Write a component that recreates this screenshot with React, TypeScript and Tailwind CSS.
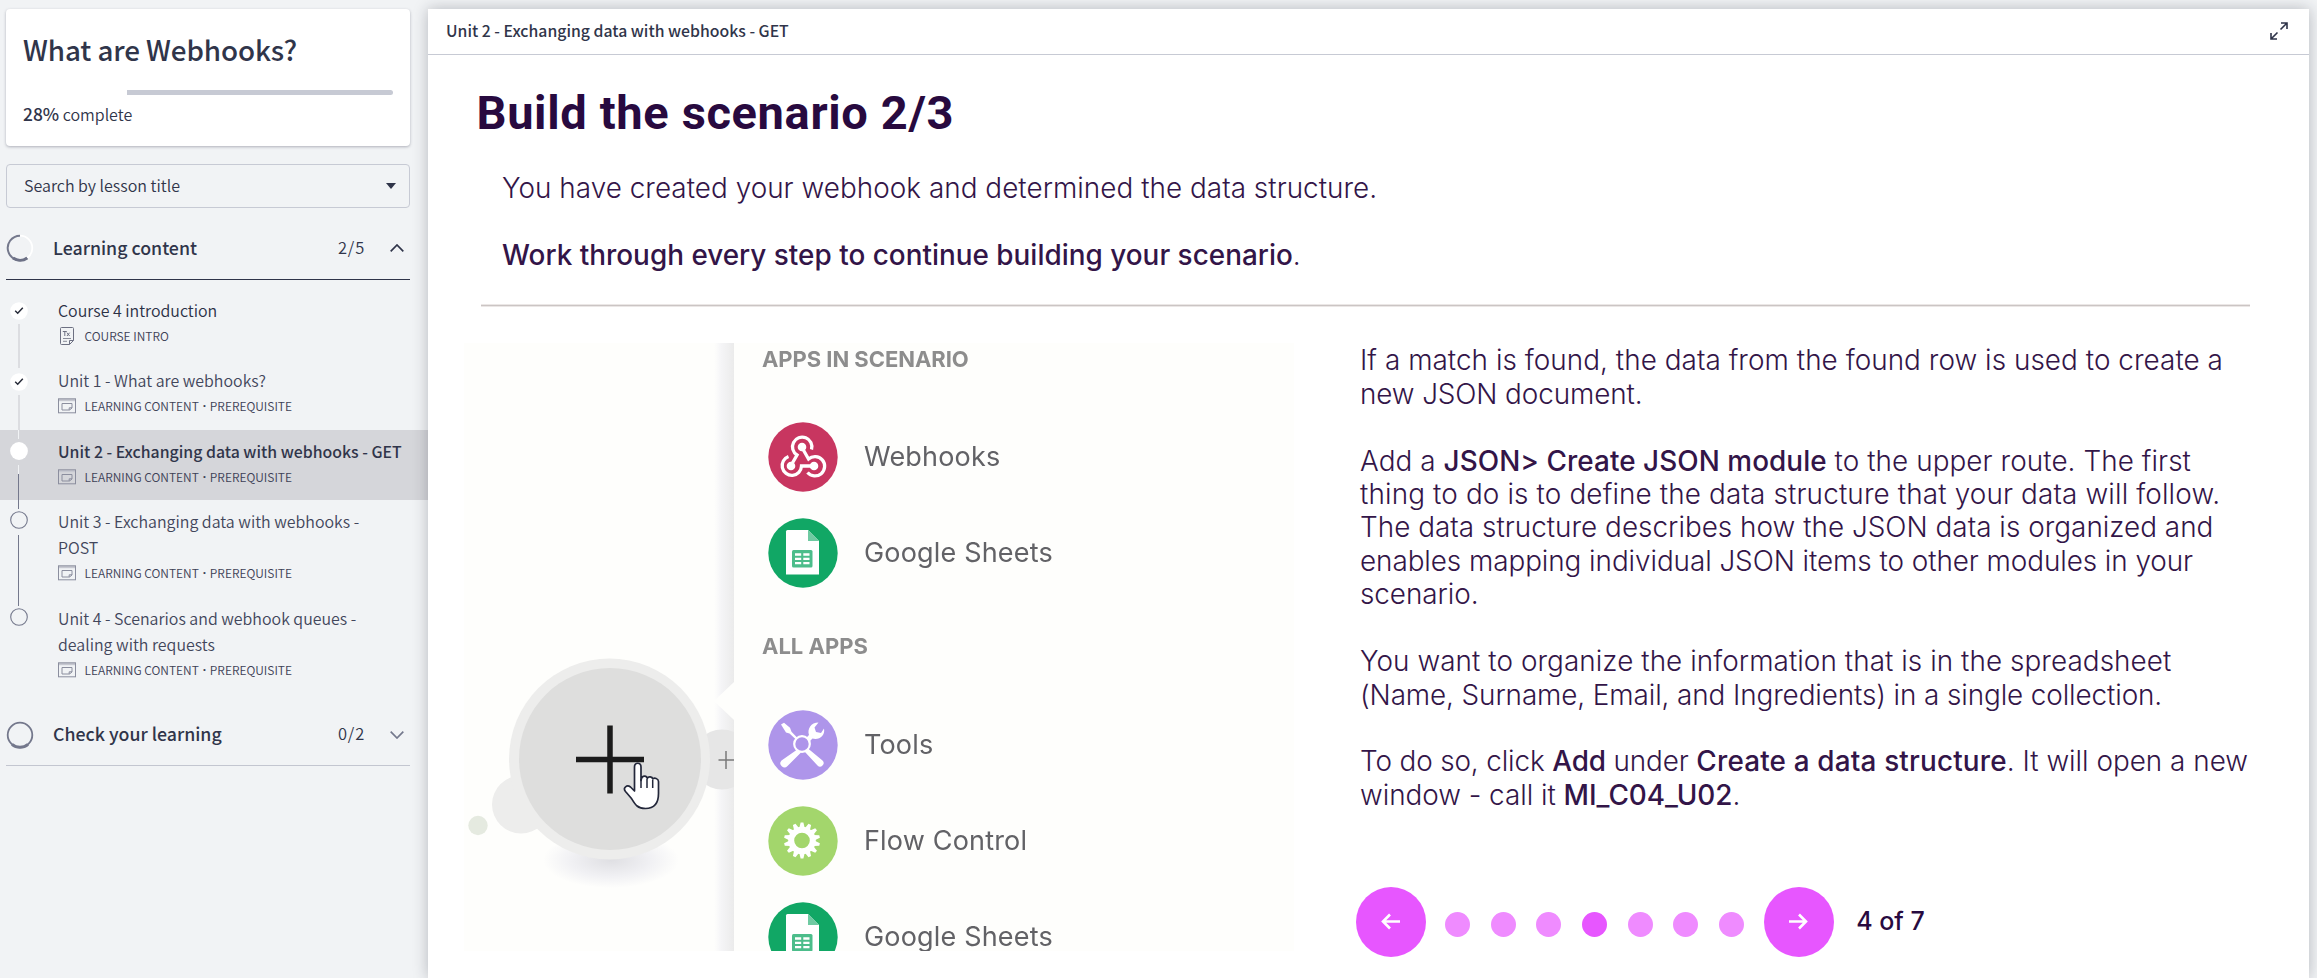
import type { ReactNode } from "react";

const SANS = "font-['Noto_Sans_CJK_SC','Noto_Sans',sans-serif]";

function CheckDot() {
  return (
    <svg viewBox="0 0 20 20" className="size-5 shrink-0">
      <circle cx="10" cy="10" r="8.8" fill="#fff" />
      <path d="M6.2 9.8 8.7 12.2 13.8 6.8" fill="none" stroke="#262a38" strokeWidth="1.5" />
    </svg>
  );
}

function FullDot() {
  return (
    <svg viewBox="0 0 20 20" className="size-5 shrink-0">
      <circle cx="10" cy="10" r="8.9" fill="#fff" />
    </svg>
  );
}

function EmptyDot() {
  return (
    <svg viewBox="0 0 20 20" className="size-5 shrink-0">
      <circle cx="10" cy="10" r="8.3" fill="none" stroke="#74788c" strokeWidth="1.1" />
    </svg>
  );
}

function DocIcon() {
  return (
    <svg viewBox="0 0 18 20" className="h-5 w-[18px]" fill="none" stroke="#6d7082" strokeWidth="1">
      <path d="M15.500 14.500V2.500a1 1 0 0 0-1-1h-11a1 1 0 0 0-1 1v15a1 1 0 0 0 1 1h8z" />
      <path d="M15.500 14.500h-4v4" />
      <path d="M4.800 5.500h4M6.800 5.500v4.500M9 6.700l2.600 3.300M11.600 6.700 9 10" />
      <path d="M5 12.500h8M5 15.300h4" strokeWidth=".8" />
    </svg>
  );
}

function WindowIcon() {
  return (
    <svg viewBox="0 0 18 16" className="h-4 w-[18px]" fill="none" stroke="#8b8e9e" strokeWidth="1">
      <path d="M.5 1h17v2.200H.500z" fill="#c6c8d0" stroke="none" />
      <rect x=".5" y=".8" width="17" height="14" />
      <path d="M4 5.500h10v4.500l-2.500 2H4z" />
      <path d="M11.200 12V9.800H14" />
    </svg>
  );
}

type Item = {
  title: string;
  meta: string;
  prereq?: boolean;
  state: "done" | "current" | "todo";
};

const items: Item[] = [
  { title: "Course 4 introduction", meta: "COURSE INTRO", state: "done" },
  { title: "Unit 1 - What are webhooks?", meta: "LEARNING CONTENT", prereq: true, state: "done" },
  { title: "Unit 2 - Exchanging data with webhooks - GET", meta: "LEARNING CONTENT", prereq: true, state: "current" },
  { title: "Unit 3 - Exchanging data with webhooks - POST", meta: "LEARNING CONTENT", prereq: true, state: "todo" },
  { title: "Unit 4 - Scenarios and webhook queues - dealing with requests", meta: "LEARNING CONTENT", prereq: true, state: "todo" },
];

function Connector({ index }: { index: number }) {
  if (index === 0) return <span className="mt-[3px] h-[44px] w-[2px] shrink-0 bg-[#dcdde1]" />;
  if (index === 1) return <span className="mt-[3px] h-[35px] w-[2px] shrink-0 bg-[#dcdde1]" />;
  if (index === 2)
    return (
      <>
        <span className="mt-[4px] h-[9px] w-px shrink-0 bg-[#f1f3f5]" />
        <span className="h-[35px] w-px shrink-0 bg-[#74788c]" />
      </>
    );
  if (index === 3) return <span className="mt-[5px] h-[71px] w-px shrink-0 bg-[#74788c]" />;
  return null;
}

function LessonItem({ item, index }: { item: Item; index: number }) {
  const current = item.state === "current";
  const tall = index > 2;
  const pad = index === 0 ? "pt-[11px]" : index === 1 ? "pt-[12px]" : index === 2 ? "" : "pt-[10px]";
  return (
    <li className={`flex w-[428px] ${tall ? "h-[97px]" : "h-[70px]"} ${current ? "bg-[#d5d6da]" : ""}`}>
      <div className={`ml-[8px] flex w-[21px] flex-col items-center ${pad}`}>
        {current && <span className="mb-[2px] h-[9px] w-px shrink-0 bg-[#f1f3f5]" />}
        {item.state === "done" ? <CheckDot /> : current ? <FullDot /> : <EmptyDot />}
        <Connector index={index} />
      </div>
      <div className={`ml-[29px] w-[350px] ${index < 2 ? "pt-[7px]" : current ? "pt-[9px]" : "pt-[8px]"}`}>
        <div
          className={`leading-[26px] ${current ? "text-[15.85px] font-medium whitespace-nowrap text-[#30354a]" : tall ? "w-[320px] text-[15.95px] font-[350] text-[#42465b]" : index === 1 ? "text-[15.95px] font-[350] text-[#42465b]" : "text-[15.95px] font-[350] text-[#2b3045]"}`}
        >
          {item.title}
        </div>
        <div className={`flex items-center text-[12px] leading-[24px] font-[350] text-[#3d4156] ${current ? "h-[24px]" : index === 0 ? "h-[25px]" : "h-[26px]"}`}>
          <span className="flex w-[26.500px]">{item.prereq ? <WindowIcon /> : <DocIcon />}</span>
          <span>{item.meta}</span>
          {item.prereq && (
            <>
              <span className="w-[11px] text-center font-['Noto_Sans'] font-bold">·</span>
              <span>PREREQUISITE</span>
            </>
          )}
        </div>
      </div>
    </li>
  );
}

function Sidebar() {
  return (
    <aside className={`h-[978px] w-[428px] pt-[9px] text-[#30354a] ${SANS}`}>
      <section className="ml-[6px] flex h-[137px] w-[404px] flex-col rounded-[4px] bg-white px-[17px] pt-[24px] shadow-[0_1px_3px_rgba(48,53,74,0.35)]">
        <h1 className="text-[27.8px] leading-[32px] font-medium tracking-[-0.1px]">What are Webhooks?</h1>
        <div className="mt-[25px] ml-[104px] h-[5px] w-[266px] rounded-r-[3px] bg-[#c7cad4]" />
        <p className="mt-[5px] text-[16px] leading-[28px] font-[350]">
          <span className="text-[17.4px] font-medium">28%</span> complete
        </p>
      </section>

      <div className="mt-[18px] ml-[6px] flex h-[44px] w-[404px] items-center justify-between rounded-[4px] border border-[#c7cad4] pr-[13px] pl-[17px]">
        <span className="pb-[3px] text-[16px] leading-[24px] font-[350]">Search by lesson title</span>
        <svg viewBox="0 0 10 6" className="h-[6px] w-[10px]" fill="#2f3449">
          <path d="M0 0h10L5 6z" />
        </svg>
      </div>

      <div className="ml-[6px] flex h-[72px] w-[404px] items-center border-b border-[#2f3449] pt-[9px]">
        <svg viewBox="0 0 28 28" className="size-7" fill="none">
          <circle cx="14" cy="14" r="12.300" stroke="#fff" strokeWidth="1.800" />
          <path d="M14 1.700A12.300 12.300 0 1 0 21.200 24" stroke="#74788c" strokeWidth="2" />
          <path d="M7 24.100A12.300 12.300 0 0 0 21.200 24" stroke="#6d7186" strokeWidth="3" />
        </svg>
        <span className="-mt-px ml-[19px] text-[17.75px] font-medium">Learning content</span>
        <span className="-mt-px ml-auto text-[16.500px] font-[350] tracking-[0.8px]">2/5</span>
        <svg viewBox="0 0 14 8" className="mr-[6px] ml-[25px] h-[8px] w-[14px]" fill="none" stroke="#2f3449" strokeWidth="1.7">
          <path d="M.7 7.300 7 1l6.300 6.300" />
        </svg>
      </div>

      <ul className="mt-[10px]">
        {items.map((item, i) => (
          <LessonItem key={item.title} item={item} index={i} />
        ))}
      </ul>

      <div className="ml-[6px] flex h-[72px] w-[404px] items-center border-b border-[#c3c6d0] pt-[10px]">
        <svg viewBox="0 0 28 28" className="size-7" fill="none" stroke="#74788c">
          <circle cx="14" cy="14" r="12.300" strokeWidth="1.800" />
          <path d="M6 23.300A12.300 12.300 0 0 0 22 23.300" strokeWidth="3" />
        </svg>
        <span className="-mt-0.5 ml-[19px] text-[17.75px] font-medium">Check your learning</span>
        <span className="-mt-0.5 ml-auto text-[16.500px] font-[350] tracking-[0.8px]">0/2</span>
        <svg viewBox="0 0 14 8" className="mr-[6px] ml-[25px] h-[8px] w-[14px]" fill="none" stroke="#74788c" strokeWidth="1.700">
          <path d="M.7.7 7 7 13.300.7" />
        </svg>
      </div>
    </aside>
  );
}

function WebhookGlyph() {
  return (
    <svg viewBox="0 0 70 70" className="size-[70px] shrink-0" fill="none">
      <circle cx="35" cy="35" r="34.700" fill="#c83660" />
      <g stroke="#fff" strokeWidth="3.300">
        <path d="M43.500 27.500A9.700 9.700 0 1 0 29 33L23 43.500" />
        <path d="M20.500 34.500A9.700 9.700 0 1 0 33.500 44H46" />
        <path d="M34 25.500 40.500 37A9.700 9.700 0 1 1 39.500 50.500" />
      </g>
      <circle cx="34" cy="25" r="4.300" fill="#fff" />
      <circle cx="23" cy="44" r="4.300" fill="#fff" />
      <circle cx="46" cy="44" r="4.300" fill="#fff" />
    </svg>
  );
}

function SheetsGlyph() {
  return (
    <svg viewBox="0 0 70 70" className="size-[70px] shrink-0">
      <circle cx="35" cy="35" r="34.700" fill="#11a765" />
      <path d="M19.500 12H40l11 11v33.500H18V13.500A1.500 1.500 0 0 1 19.500 12z" fill="#fff" />
      <path d="M40 12l11 11H40z" fill="#6fcaa2" />
      <rect x="24" y="32" width="20.500" height="17.500" rx="1.500" fill="#4cbd8b" />
      <path d="M27 36.500h14.500M27 40.800h14.500M27 45.200h14.500" stroke="#fff" strokeWidth="2.300" strokeDasharray="6.200 2.100" />
    </svg>
  );
}

function ToolsGlyph() {
  return (
    <svg viewBox="0 0 70 70" className="size-[70px] shrink-0" fill="none">
      <circle cx="35" cy="35" r="34.700" fill="#ae95ea" />
      <path d="M13 14.500l3-1.800 6 5 1.500 4 7 7.300-1.500 1.500-7.500-7-3.500-1z" fill="#fff" />
      <path d="M40 38.500l14.500 12a3.500 3.500 0 0 1-5 5L37 42z" fill="#fff" />
      <path d="M30 39 33 42.500 19.500 56a3.800 3.800 0 0 1-6-5.500z" fill="#fff" />
      <path d="M38 28l3-3c-2-6 2-12.500 9.500-12.500l-4 5 1.500 4.500 5 1 3-4.500c1.500 7-5 12-11.500 10l-3 3z" fill="#fff" />
      <circle cx="34" cy="34" r="7.800" fill="#ae95ea" stroke="#fff" strokeWidth="2.200" />
    </svg>
  );
}

function GearGlyph() {
  const teeth = Array.from({ length: 14 }, (_, i) => (i * 360) / 14);
  return (
    <svg viewBox="0 0 70 70" className="size-[70px] shrink-0">
      <circle cx="35" cy="35" r="34.700" fill="#a3d66c" />
      <g fill="#fff">
        {teeth.map((a) => (
          <path key={a} d="M31.300 22l1.300-5.500h2.800l1.300 5.500z" transform={`rotate(${a} 34 34.500)`} />
        ))}
      </g>
      <circle cx="34" cy="34.500" r="10.800" fill="none" stroke="#fff" strokeWidth="6" />
    </svg>
  );
}

function AppRow({ glyph, label }: { glyph: ReactNode; label: string }) {
  return (
    <div className="flex h-[96px] shrink-0 items-center">
      {glyph}
      <span className="ml-[26px] text-[27px] leading-[32px] tracking-[0.180px] whitespace-nowrap text-[#626266]">{label}</span>
    </div>
  );
}

function Illustration() {
  return (
    <div className="flex h-[608px] w-[830px] overflow-hidden bg-[#fefefc] blur-[0.5px]">
      <svg viewBox="464 343 270 608" className="h-[608px] w-[270px] shrink-0">
        <defs>
          <linearGradient id="edge" x1="0" x2="1" y1="0" y2="0">
            <stop offset="0" stopColor="#f7f7f9" stopOpacity="0" />
            <stop offset=".35" stopColor="#f5f5f7" />
            <stop offset="1" stopColor="#ebebeb" />
          </linearGradient>
          <radialGradient id="shade">
            <stop offset="0" stopColor="#dfdfe3" />
            <stop offset=".6" stopColor="#f1f1f4" />
            <stop offset="1" stopColor="#fefefc" />
          </radialGradient>
        </defs>
        <ellipse cx="611" cy="860" rx="68" ry="28" fill="url(#shade)" />
        <rect x="714" y="343" width="20" height="608" fill="url(#edge)" />
        <circle cx="722" cy="759.500" r="30" fill="#e6e6e6" />
        <circle cx="521" cy="804.500" r="29" fill="#ededec" />
        <circle cx="478" cy="825.500" r="9.700" fill="#e5eae0" />
        <circle cx="609.500" cy="759" r="100.500" fill="#ededec" />
        <circle cx="610" cy="759" r="91" fill="#dededd" />
        <path d="M714 701l20-19v38z" fill="#fefefc" />
        <path d="M576 759.500h68M610 725.500v68" stroke="#1b1b1b" strokeWidth="5.500" />
        <path d="M718.500 760H734M726 751v18" stroke="#7a7a7a" strokeWidth="1.500" />
        <path
          d="M634.500 767c0-5 6.500-5 6.500 0v13.500l.5-2c1-3.500 5.500-3 5.800 0 1-2.500 5-2 5.500.5 1.500-1.500 5.500-.8 5.700 2.500v12c0 9-4 15-13 15-8 0-10-3.500-14-10l-6-7c-3-4 1.500-7 5-4.500l4 4z"
          fill="#fff"
          stroke="#23273a"
          strokeWidth="1.700"
          strokeLinejoin="round"
        />
        <path d="M641 779v9M647 779v9M652.700 780v8" stroke="#23273a" strokeWidth="1.500" />
      </svg>
      <div className="flex flex-col pl-[28px]">
        <div className="h-[66px] shrink-0 text-[22px] leading-[32px] font-bold tracking-[-0.05px] whitespace-nowrap text-[#8d8d8d]">APPS IN SCENARIO</div>
        <div className="shrink-0 pl-[6px]">
          <AppRow glyph={<WebhookGlyph />} label="Webhooks" />
          <AppRow glyph={<SheetsGlyph />} label="Google Sheets" />
        </div>
        <div className="h-[96px] shrink-0 pt-[29px] text-[22px] leading-[32px] font-bold text-[#8d8d8d]">ALL APPS</div>
        <div className="shrink-0 pl-[6px]">
          <AppRow glyph={<ToolsGlyph />} label="Tools" />
          <AppRow glyph={<GearGlyph />} label="Flow Control" />
          <AppRow glyph={<SheetsGlyph />} label="Google Sheets" />
        </div>
      </div>
    </div>
  );
}

function Copy() {
  return (
    <div className="flex flex-col gap-[33.440px] text-[27.870px] leading-[33.440px] font-light whitespace-nowrap text-[#331548]">
      <p>
        <span className="block tracking-[0.050px]">If a match is found, the data from the found row is used to create a</span>
        <span className="block tracking-[-0.110px]">new JSON document.</span>
      </p>
      <p>
        <span className="block tracking-[0.070px]">
          Add a <b className="font-medium">JSON&gt; Create JSON module</b> to the upper route. The first
        </span>
        <span className="block tracking-[0.140px]">thing to do is to define the data structure that your data will follow.</span>
        <span className="block tracking-[0.020px]">The data structure describes how the JSON data is organized and</span>
        <span className="block tracking-[-0.065px]">enables mapping individual JSON items to other modules in your</span>
        <span className="block tracking-[-0.050px]">scenario.</span>
      </p>
      <p>
        <span className="block tracking-[0.065px]">You want to organize the information that is in the spreadsheet</span>
        <span className="block tracking-[-0.100px]">(Name, Surname, Email, and Ingredients) in a single collection.</span>
      </p>
      <p>
        <span className="block">
          <span className="tracking-[-0.130px]">
            To do so, click <b className="font-medium">Add</b> under{" "}
          </span>
          <b className="font-medium tracking-[0.180px]">Create a data structure</b>. It will open a new
        </span>
        <span className="block tracking-[-0.030px]">
          window - call it <b className="font-medium">MI_C04_U02</b>.
        </span>
      </p>
    </div>
  );
}

function RoundButton({ dir }: { dir: "left" | "right" }) {
  return (
    <button className="flex size-[70px] items-center justify-center rounded-full bg-[#e756ff]">
      <svg viewBox="0 0 20 18" className="h-[18px] w-5" fill="none" stroke="#fff" strokeWidth="2.600">
        {dir === "left" ? <path d="M19 8.500H2M9 1.500 2 8.500l7 7" /> : <path d="M0 8.500h17M10 1.500 17 8.500l-7 7" />}
      </svg>
    </button>
  );
}

function Pager() {
  return (
    <div className="flex h-[86px] items-center">
      <RoundButton dir="left" />
      <div className="ml-[19px] flex gap-[20.700px] pt-[4px]">
        {[0, 1, 2, 3, 4, 5, 6].map((n) => (
          <span key={n} className={`size-[25px] rounded-full ${n === 3 ? "bg-[#e756ff]" : "bg-[#ef8bff]"}`} />
        ))}
      </div>
      <div className="ml-[20px] flex">
        <RoundButton dir="right" />
      </div>
      <span className="ml-[22px] text-[25px] font-medium text-[#280a3f]">4 of 7</span>
    </div>
  );
}

function Lesson() {
  return (
    <main className="mt-[9px] flex h-[969px] w-[1881px] flex-col bg-white font-['Inter',sans-serif] shadow-[0_0_14px_rgba(30,32,45,0.28)]">
      <header className={`flex h-[46px] shrink-0 items-center justify-between border-b border-[#c7cad4] pr-[21px] pb-px pl-[18px] text-[#30354a] ${SANS}`}>
        <span className="text-[15.800px] leading-[24px] font-medium">Unit 2 - Exchanging data with webhooks - GET</span>
        <svg viewBox="0 0 18 18" className="size-[18px]" fill="none" stroke="#2f3449" strokeWidth="1.600">
          <path d="M11 1h6v6M17 1l-6.500 6.500M7 17H1v-6M1 17l6.500-6.500" />
        </svg>
      </header>
      <h2 className="mt-[28px] ml-[48.500px] h-[60px] font-[Roboto] text-[47px] leading-[60px] font-bold tracking-[0.650px] text-[#280a3f]">
        Build the scenario 2/3
      </h2>
      <div className="mt-[29px] ml-[74px] flex flex-col gap-[33.440px] text-[27.870px] leading-[33.440px] font-light text-[#331548]">
        <p className="tracking-[0.035px]">You have created your webhook and determined the data structure.</p>
        <p>
          <b className="font-medium tracking-[0.020px]">Work through every step to continue building your scenario</b>.
        </p>
      </div>
      <hr className="mt-[31.700px] ml-[53px] h-[3px] w-[1769px] border-y border-[#ebe7e6] bg-[#cbc5c4]" />
      <div className="mt-[36px] flex pl-[36px]">
        <Illustration />
        <div className="ml-[66px] flex flex-col">
          <div className="h-[536px] pt-[1.200px]">
            <Copy />
          </div>
          <div className="-ml-[4px]">
            <Pager />
          </div>
        </div>
      </div>
    </main>
  );
}

export default function App() {
  return (
    <div className="flex h-[978px] w-[2317px] overflow-hidden bg-[#f1f3f5]">
      <Sidebar />
      <Lesson />
    </div>
  );
}
